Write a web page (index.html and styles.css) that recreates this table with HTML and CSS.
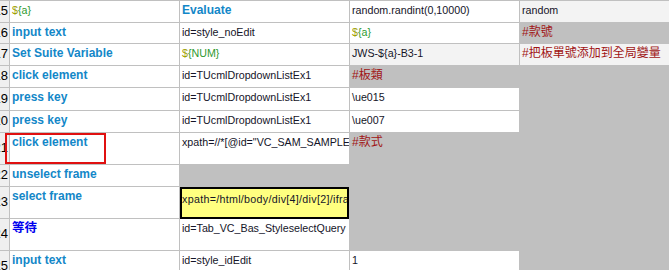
FILE: index.html
```html
<!DOCTYPE html>
<html>
<head>
<meta charset="utf-8">
<link rel="stylesheet" href="styles.css">
</head>
<body>
<div class="sheet">
  <div class="grid">
    <div class="num"><span>15</span></div>
    <div class="c"><span class="var"><span class="dl">$</span>{a}</span></div>
    <div class="c kw">Evaluate</div>
    <div class="c arg">random.randint(0,10000)</div>
    <div class="c arg light">random</div>

    <div class="num"><span>16</span></div>
    <div class="c kw">input text</div>
    <div class="c arg">id=style_noEdit</div>
    <div class="c"><span class="var"><span class="dl">$</span>{a}</span></div>
    <div class="c cm empty">#款號</div>

    <div class="num"><span>17</span></div>
    <div class="c kw">Set Suite Variable</div>
    <div class="c"><span class="var"><span class="dl">$</span>{NUM}</span></div>
    <div class="c arg light">JWS-${a}-B3-1</div>
    <div class="c cm light">#把板單號添加到全局變量</div>

    <div class="num"><span>18</span></div>
    <div class="c kw">click element</div>
    <div class="c arg">id=TUcmlDropdownListEx1</div>
    <div class="c cm empty">#板類</div>
    <div class="c empty"></div>

    <div class="num"><span>19</span></div>
    <div class="c kw">press key</div>
    <div class="c arg">id=TUcmlDropdownListEx1</div>
    <div class="c arg">\ue015</div>
    <div class="c empty"></div>

    <div class="num"><span>20</span></div>
    <div class="c kw">press key</div>
    <div class="c arg">id=TUcmlDropdownListEx1</div>
    <div class="c arg">\ue007</div>
    <div class="c empty"></div>

    <div class="num"><span>21</span></div>
    <div class="c kw">click element</div>
    <div class="c arg">xpath=//*[@id="VC_SAM_SAMPLE_TypeName"]</div>
    <div class="c cm empty">#款式</div>
    <div class="c empty"></div>

    <div class="num"><span>22</span></div>
    <div class="c kw">unselect frame</div>
    <div class="c empty"></div>
    <div class="c empty"></div>
    <div class="c empty"></div>

    <div class="num"><span>23</span></div>
    <div class="c kw">select frame</div>
    <div class="c arg hl">xpath=/html/body/div[4]/div[2]/iframe</div>
    <div class="c empty"></div>
    <div class="c empty"></div>

    <div class="num"><span>24</span></div>
    <div class="c kw2">等待</div>
    <div class="c arg">id=Tab_VC_Bas_StyleselectQuery</div>
    <div class="c empty"></div>
    <div class="c empty"></div>

    <div class="num"><span>25</span></div>
    <div class="c kw">input text</div>
    <div class="c arg">id=style_idEdit</div>
    <div class="c arg">1</div>
    <div class="c empty"></div>
  </div>
  <div class="mark"></div>
</div>
</body>
</html>
```

FILE: styles.css
```css
html, body {
  margin: 0;
  padding: 0;
  background: #c0c0c0;
  overflow: hidden;
}

.sheet {
  position: relative;
  width: 669px;
  height: 270px;
  overflow: hidden;
}

.grid {
  display: grid;
  grid-template-columns: 9px 169px 169px 169px 1fr;
  grid-template-rows: 21px 20px 21px 21px 22px 21px 31px 21px 31px 31px 30px;
  gap: 1px;
  padding-top: 1px;
  background: #c0c0c0;
  font-family: "Liberation Sans", "Noto Sans CJK TC", sans-serif;
}

.num {
  background: #efefef;
  display: flex;
  justify-content: flex-end;
  align-items: center;
  overflow: hidden;
  font-size: 13px;
  color: #000;
  padding-right: 1px;
  padding-bottom: 2px;
  box-sizing: border-box;
}

.c {
  background: #ffffff;
  padding: 2px 2px 0 2px;
  line-height: 14px;
  white-space: nowrap;
  overflow: hidden;
  font-size: 10.7px;
  color: #141428;
  box-sizing: border-box;
}

.kw {
  font-weight: bold;
  font-size: 12px;
  color: #1387c8;
}

.kw2 {
  font-weight: bold;
  font-size: 12.5px;
  color: #0000ee;
}

.arg {
  color: #141428;
}

.cm {
  font-size: 12px;
  color: #a01414;
}

.var {
  color: #2e9a2e;
}

.dl {
  color: #a0a000;
}

.empty {
  background: #c0c0c0;
}

.light {
  background: #f3f3f3;
}

.hl {
  background: #ffff80;
  border: 2px solid #000;
  padding: 3px 1px 0 0;
  margin-bottom: -1px;
  letter-spacing: 0.3px;
}

.mark {
  position: absolute;
  left: 5px;
  top: 133px;
  width: 101px;
  height: 31px;
  border: 2px solid #e01010;
  box-sizing: border-box;
}
```
